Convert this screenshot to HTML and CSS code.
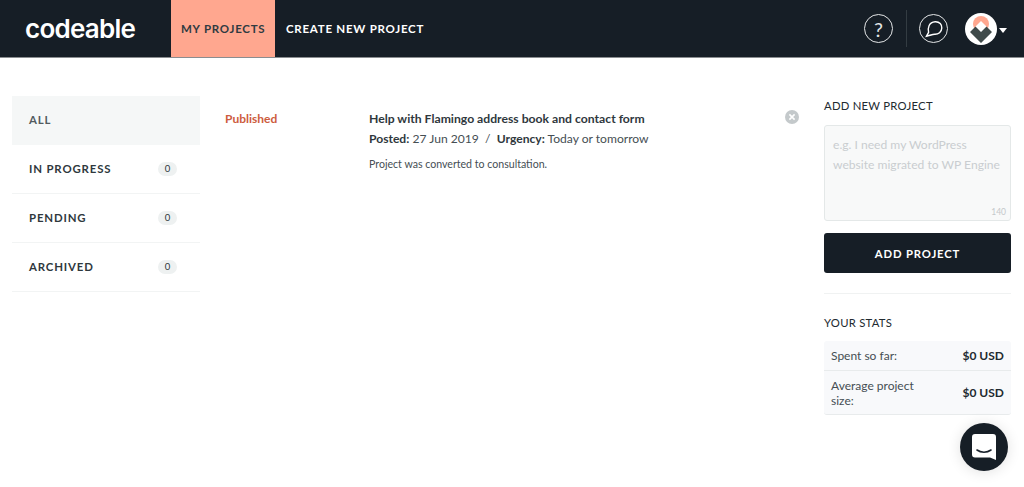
FILE: index.html
```html
<!DOCTYPE html>
<html lang="en">
<head>
    <meta charset="UTF-8">
    <meta name="viewport" content="width=device-width, initial-scale=1.0">
    <title>Codeable - My Projects</title>
    <link rel="stylesheet" href="styles.css">
</head>
<body>
    <header class="topbar">
        <a class="logo" href="#">codeable</a>
        <nav class="topnav">
            <a class="topnav-item active" href="#">MY PROJECTS</a>
            <a class="topnav-item" href="#">CREATE NEW PROJECT</a>
        </nav>
        <div class="top-actions">
            <a class="round-icon help" href="#">?</a>
            <span class="top-divider"></span>
            <a class="round-icon" href="#">
                <svg width="20" height="20" viewBox="0 0 20 20" fill="none" stroke="#fff" stroke-width="1.4">
                    <path d="M2.5 17.2 L4.6 13.4 C3.6 9.6 4.6 3.2 11.2 2.8 C15.6 2.6 18 5.6 17.8 9 C17.6 13 14.4 15.4 10.8 15.3 C8.4 15.3 5.6 16.6 2.5 17.2 Z"/>
                </svg>
            </a>
            <a class="avatar" href="#">
                <svg width="32" height="32" viewBox="0 0 32 32">
                    <circle cx="16" cy="16" r="16" fill="#fff"/>
                    <circle cx="16" cy="11" r="8" fill="#ffa78f"/>
                    <path d="M16 8 L22 14 L16 20 L10 14 Z" fill="#fff"/>
                    <path d="M10.5 13.5 L16 19 L21.5 13.5 L27 19 L16 30 L5 19 Z" fill="#3f4a4a"/>
                </svg>
            </a>
            <span class="caret"></span>
        </div>
    </header>

    <main class="page">
        <ul class="sidebar">
            <li class="side-item selected"><span>ALL</span></li>
            <li class="side-item"><span>IN PROGRESS</span><span class="badge">0</span></li>
            <li class="side-item"><span>PENDING</span><span class="badge">0</span></li>
            <li class="side-item"><span>ARCHIVED</span><span class="badge">0</span></li>
        </ul>

        <section class="projects">
            <div class="project">
                <div class="status">Published</div>
                <div class="project-info">
                    <h3>Help with Flamingo address book and contact form</h3>
                    <p class="meta"><b>Posted:</b> 27 Jun 2019 &nbsp;/&nbsp; <b>Urgency:</b> Today or tomorrow</p>
                    <p class="note">Project was converted to consultation.</p>
                </div>
                <span class="close-btn">
                    <svg width="14" height="14" viewBox="0 0 14 14">
                        <circle cx="7" cy="7" r="7" fill="#c4c9cb"/>
                        <path d="M4.4 4.4 L9.6 9.6 M9.6 4.4 L4.4 9.6" stroke="#fff" stroke-width="1.6"/>
                    </svg>
                </span>
            </div>
        </section>

        <aside class="right-col">
            <h4>ADD NEW PROJECT</h4>
            <div class="new-project">
                <div class="placeholder">e.g. I need my WordPress website migrated to WP Engine</div>
                <span class="counter">140</span>
            </div>
            <button class="add-btn">ADD PROJECT</button>
            <hr class="right-sep">
            <h4>YOUR STATS</h4>
            <div class="stats">
                <div class="stat-row"><span>Spent so far:</span><b>$0 USD</b></div>
                <div class="stat-row"><span>Average project size:</span><b>$0 USD</b></div>
            </div>
        </aside>
    </main>

    <a class="chat-bubble" href="#">
        <svg width="26" height="28" viewBox="0 0 26 28">
            <path d="M4 1 H22 A3 3 0 0 1 25 4 V27 L19 24.6 H4 A3 3 0 0 1 1 21.6 V4 A3 3 0 0 1 4 1 Z" fill="#fff"/>
            <path d="M6 17 C10 20 16 20 20 17" fill="none" stroke="#17202a" stroke-width="1.6" stroke-linecap="round"/>
        </svg>
    </a>
</body>
</html>
```

FILE: styles.css
```css
* {
    box-sizing: border-box;
}
body {
    margin: 0;
    background-color: #fff;
    color: #2f383d;
    font-family: Lato, "Liberation Sans", sans-serif;
    height: 487px;
    overflow: hidden;
}
a {
    text-decoration: none;
    color: inherit;
}
.topbar {
    display: flex;
    align-items: stretch;
    height: 58px;
    background-color: #161e26;
    border-bottom: 1px solid #8a8d90;
    color: #fff;
}
.logo {
    width: 171px;
    padding-left: 25px;
    font-family: Inter, sans-serif;
    font-size: 26px;
    font-weight: 600;
    letter-spacing: -0.75px;
    line-height: 57px;
}
.topnav {
    display: flex;
}
.topnav-item {
    display: flex;
    align-items: center;
    padding: 0 11px;
    font-size: 11.5px;
    font-weight: 700;
    letter-spacing: 0.75px;
    white-space: nowrap;
}
.topnav-item.active {
    width: 104px;
    padding: 0 10px;
    background-color: #ffa78f;
    color: #2f3b42;
}
.top-actions {
    display: flex;
    align-items: center;
    margin-left: auto;
    padding-right: 17px;
}
.round-icon {
    display: flex;
    align-items: center;
    justify-content: center;
    width: 29px;
    height: 29px;
    border: 1.5px solid #e4e6e7;
    border-radius: 50%;
}
.help {
    font-size: 20px;
    font-weight: 400;
    color: #e4e6e7;
}
.top-divider {
    width: 1px;
    height: 37px;
    margin: 0 12px 0 13px;
    background-color: #333c42;
}
.avatar {
    display: flex;
    margin-left: 17px;
}
.caret {
    margin-left: 2px;
    margin-top: 3px;
    border-left: 4px solid transparent;
    border-right: 4px solid transparent;
    border-top: 5px solid #fff;
}
.page {
    display: flex;
    padding: 38px 13px 0 12px;
}
.sidebar {
    flex: 0 0 188px;
    list-style: none;
    margin: 0;
    padding: 0;
}
.side-item {
    display: flex;
    align-items: center;
    justify-content: space-between;
    height: 49px;
    padding: 0 23px 0 17px;
    border-bottom: 1px solid #f2f4f4;
    font-size: 11.4px;
    font-weight: 700;
    letter-spacing: 0.85px;
}
.side-item span:first-child {
    margin-bottom: 2px;
}
.side-item.selected {
    background-color: #f5f7f7;
    color: #525b5f;
    border-bottom: 0;
}
.badge {
    display: inline-block;
    width: 19px;
    height: 14px;
    border-radius: 7px;
    background-color: #eef1f1;
    font-size: 9.5px;
    font-weight: 400;
    letter-spacing: 0;
    line-height: 14px;
    text-align: center;
}
.projects {
    flex: 1;
    padding: 14px 0 0 25px;
}
.project {
    display: flex;
    align-items: flex-start;
}
.status {
    width: 144px;
    color: #cd5c3e;
    font-size: 12px;
    font-weight: 700;
    line-height: 17px;
}
.project-info {
    flex: 1;
}
.project-info h3 {
    margin: 0 0 3px;
    font-size: 12.2px;
    font-weight: 700;
    line-height: 17px;
}
.meta {
    margin: 0 0 10px;
    font-size: 12.1px;
    line-height: 17px;
    color: #454e53;
}
.meta b {
    color: #2f383d;
}
.note {
    margin: 0;
    font-size: 10.6px;
    line-height: 15px;
    color: #454e53;
}
.close-btn {
    display: flex;
    margin: 0 2px 0 0;
}
.right-col {
    flex: 0 0 187px;
    margin-left: 23px;
}
.right-col h4 {
    margin: 0;
    padding-top: 1px;
    font-size: 11.3px;
    font-weight: 400;
    letter-spacing: 0.25px;
    line-height: 17px;
    color: #222a30;
}
.new-project {
    position: relative;
    height: 96px;
    margin-top: 11px;
    padding: 9px 8px;
    background-color: #f8f9f9;
    border: 1px solid #e4e8e8;
    border-radius: 3px;
}
.placeholder {
    color: #c9cdd0;
    font-size: 12.1px;
    line-height: 20px;
}
.counter {
    position: absolute;
    right: 4px;
    bottom: 3px;
    color: #c4c8ca;
    font-size: 8.5px;
}
.add-btn {
    display: block;
    width: 100%;
    height: 40px;
    margin-top: 12px;
    border: 0;
    border-radius: 3px;
    background-color: #161e26;
    color: #fff;
    font-family: inherit;
    font-size: 11.3px;
    font-weight: 700;
    letter-spacing: 0.85px;
}
.right-sep {
    margin: 20px 0 20px;
    border: 0;
    border-top: 1px solid #f0f2f2;
}
.right-sep + h4 {
    padding-top: 0;
}
.stats {
    margin-top: 10px;
    background-color: #f8f9fb;
    border-bottom: 1px solid #e8ebec;
    border-radius: 3px;
}
.stat-row {
    display: flex;
    align-items: center;
    justify-content: space-between;
    padding: 5px 7px;
    min-height: 29px;
    font-size: 12px;
    line-height: 15px;
    color: #454e53;
}
.stat-row + .stat-row {
    border-top: 1px solid #e8ebec;
    min-height: 44px;
}
.stat-row span {
    max-width: 105px;
}
.stat-row b {
    color: #222a30;
    white-space: nowrap;
}
.chat-bubble {
    position: absolute;
    left: 960px;
    top: 423px;
    display: flex;
    align-items: center;
    justify-content: center;
    width: 48px;
    height: 48px;
    border-radius: 50%;
    background-color: #161e26;
    box-shadow: 0 1px 14px rgba(0, 0, 0, 0.12);
}
```
